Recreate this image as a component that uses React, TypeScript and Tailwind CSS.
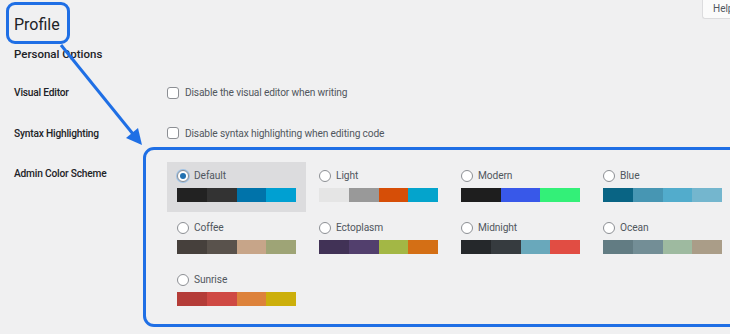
import * as React from "react";

type Scheme = { name: string; colors: string[]; selected?: boolean };

const SCHEMES: Scheme[] = [
  { name: "Default", colors: ["#222222", "#333333", "#0073aa", "#00a0d2"], selected: true },
  { name: "Light", colors: ["#e5e5e5", "#999999", "#d64e07", "#04a4cc"] },
  { name: "Modern", colors: ["#1e1e1e", "#3858e9", "#33f078"] },
  { name: "Blue", colors: ["#096484", "#4796b3", "#52accc", "#74b6ce"] },
  { name: "Coffee", colors: ["#46403c", "#59524c", "#c7a589", "#9ea476"] },
  { name: "Ectoplasm", colors: ["#413256", "#523f6d", "#a3b745", "#d46f15"] },
  { name: "Midnight", colors: ["#25282b", "#363b3f", "#69a8bb", "#e14d43"] },
  { name: "Ocean", colors: ["#627c83", "#738e96", "#9ebaa0", "#aa9d88"] },
  { name: "Sunrise", colors: ["#b43c38", "#cf4944", "#dd823b", "#ccaf0b"] },
];

function Checkbox({ label }: { label: string }) {
  return (
    <label className="flex items-center gap-[6px] text-[10.2px] tracking-[-0.15px] text-[#50575e]">
      <span className="h-[12px] w-[12px] shrink-0 rounded-[3px] border border-[#8c8f94] bg-white" />
      {label}
    </label>
  );
}

function ColorOption({ scheme }: { scheme: Scheme }) {
  return (
    <div
      className={
        "h-[50px] w-[139px] pl-[10px] pt-[8px] " +
        (scheme.selected ? "bg-[#dcdcde]" : "")
      }
    >
      <div className="flex h-[12px] items-center gap-[5px]">
        <span
          className={
            "flex h-[12px] w-[12px] items-center justify-center rounded-full border border-[#8c8f94] bg-white " +
            (scheme.selected ? "ring-1 ring-[#9ec2e6]" : "")
          }
        >
          {scheme.selected && <span className="h-[6px] w-[6px] rounded-full bg-[#2271b1]" />}
        </span>
        <span className="text-[10.2px] tracking-[-0.1px] text-[#50575e]">{scheme.name}</span>
      </div>
      <div className="mt-[6px] flex h-[14px] w-[119px]">
        {scheme.colors.map((c) => (
          <span key={c} className="h-full flex-1" style={{ background: c }} />
        ))}
      </div>
    </div>
  );
}

export default function App() {
  return (
    <div
      className="relative h-[334px] w-[730px] overflow-hidden bg-[#f0f0f1] text-[#1d2327]"
      style={{ fontFamily: 'Roboto, "Noto Sans", sans-serif' }}
    >
      {/* help tab */}
      <div className="absolute right-0 top-0 h-[19px] w-[28px] whitespace-nowrap rounded-bl-[3px] border-b border-l border-[#dcdcde] bg-[#fbfbfb] pl-[10px] text-[10px] leading-[18px] text-[#50575e]">
        Help
      </div>

      <div className="pl-[14px] pt-[13px]">
        <h1 className="text-[16px] leading-[24px]">Profile</h1>
        <h2 className="mt-[8px] text-[11.5px] font-medium leading-[18px]">Personal Options</h2>

        <div className="mt-[10px] flex flex-col">
          <div className="flex h-[40px] items-center">
            <div className="w-[153px] shrink-0 text-[10.2px] font-medium tracking-[-0.2px]">Visual Editor</div>
            <Checkbox label="Disable the visual editor when writing" />
          </div>
          <div className="flex h-[41px] items-center">
            <div className="w-[153px] shrink-0 text-[10.2px] font-medium tracking-[-0.2px]">Syntax Highlighting</div>
            <Checkbox label="Disable syntax highlighting when editing code" />
          </div>
          <div className="mt-[8px] flex">
            <div className="w-[153px] shrink-0 pt-[4px] text-[10.2px] font-medium tracking-[-0.2px]">Admin Color Scheme</div>
            <div className="grid shrink-0 grid-cols-[repeat(4,142px)] gap-y-[2px]">
              {SCHEMES.map((s) => (
                <ColorOption key={s.name} scheme={s} />
              ))}
            </div>
          </div>
        </div>
      </div>

      {/* annotation overlays */}
      <div className="pointer-events-none absolute left-[6px] top-[2px] h-[42px] w-[64px] rounded-[9px] border-[3px] border-[#1f6fe5]" />
      <div className="pointer-events-none absolute left-[143px] top-[147px] h-[180px] w-[620px] rounded-[11px] border-[3px] border-[#1f6fe5]" />
      <svg className="pointer-events-none absolute left-0 top-0" width="730" height="334">
        <line x1="61" y1="45" x2="133" y2="134" stroke="#1f6fe5" strokeWidth="3" />
        <polygon points="142,145 126,138 138,128" fill="#1f6fe5" />
      </svg>
    </div>
  );
}
